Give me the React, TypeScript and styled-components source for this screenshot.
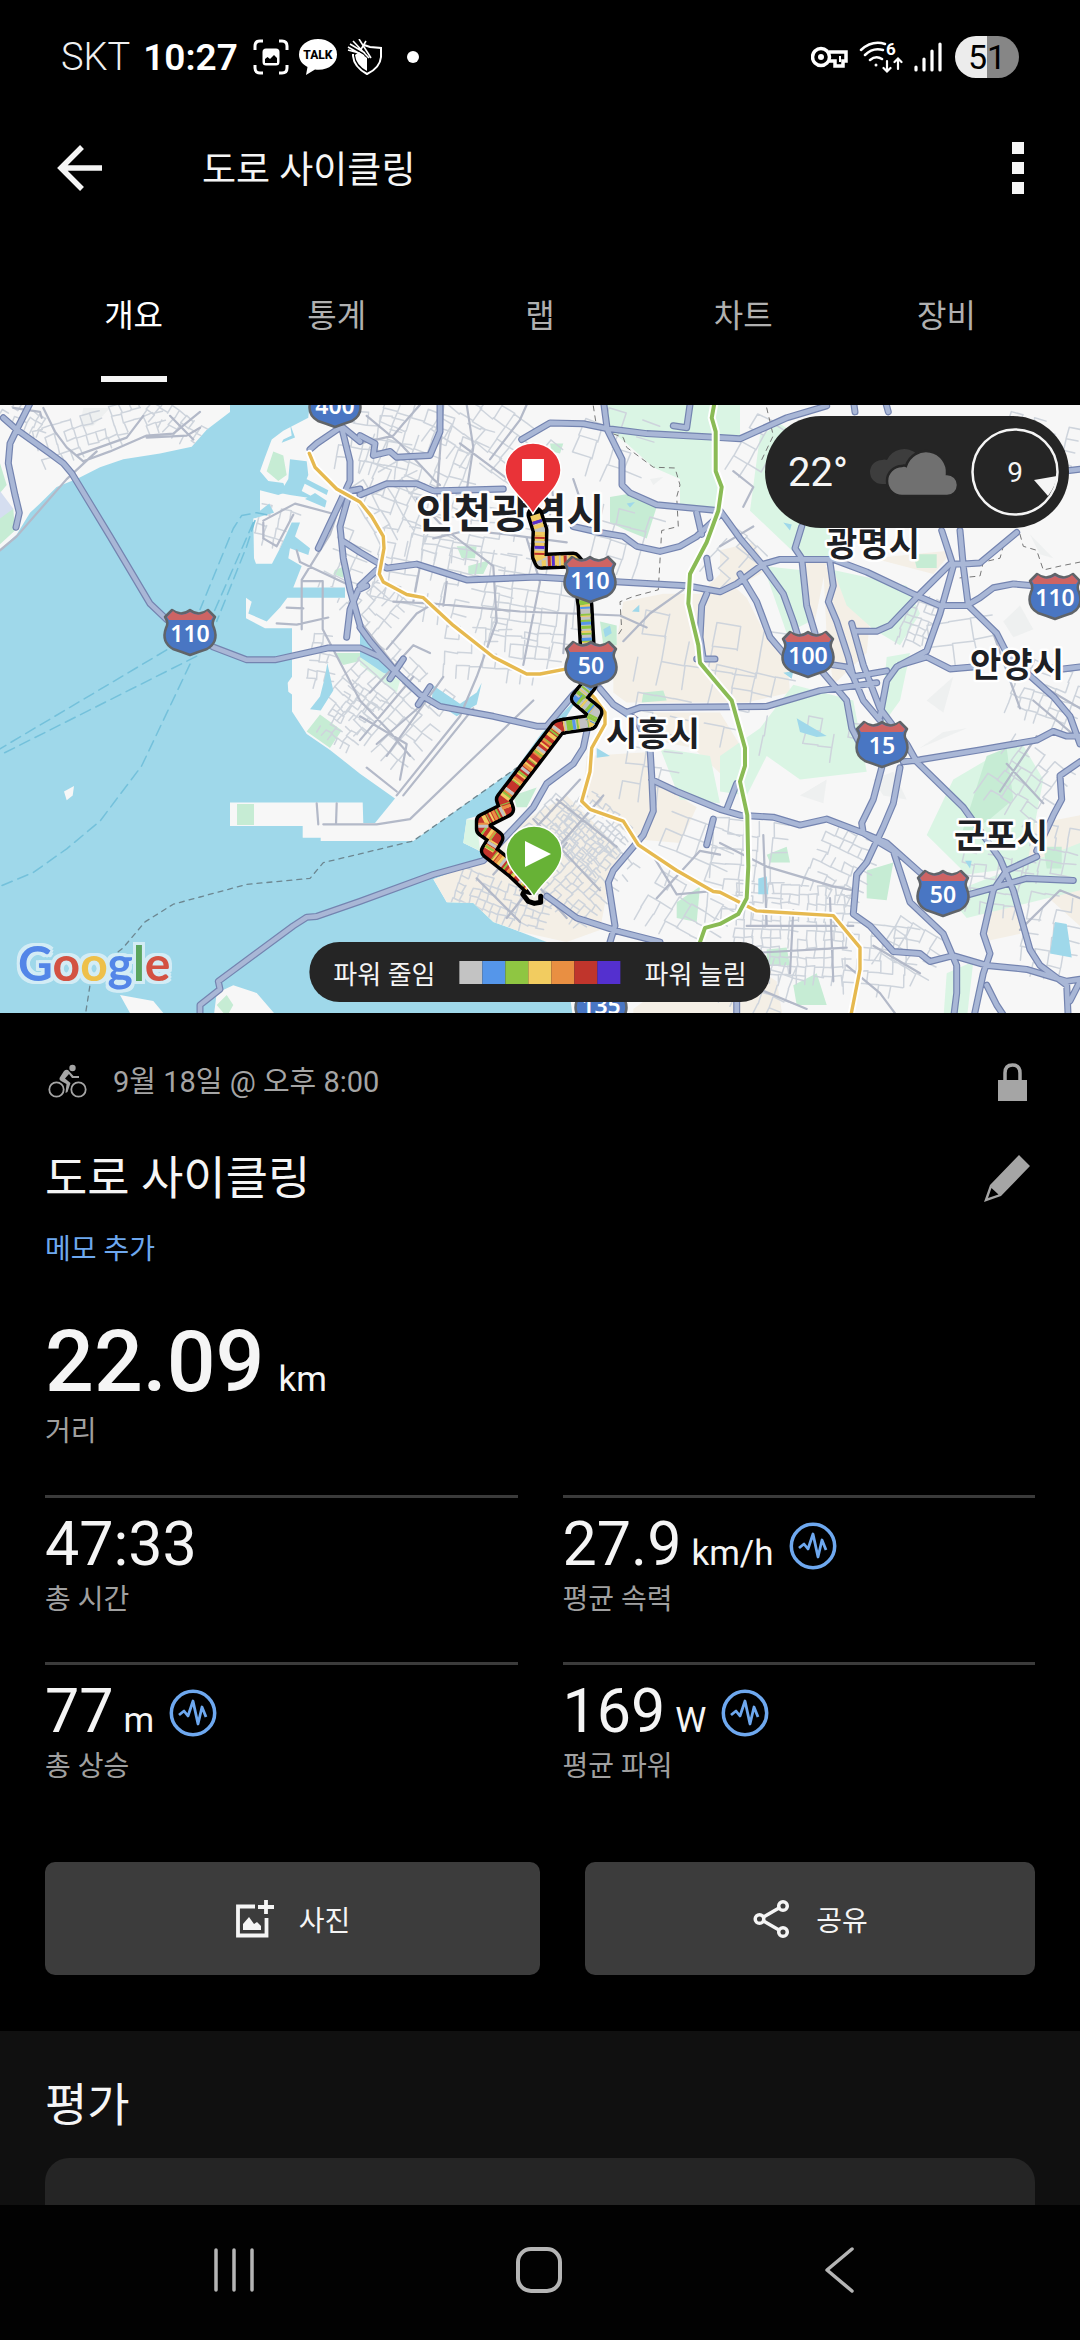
import React, { useState } from 'react';
import styled, { createGlobalStyle } from 'styled-components';

const GlobalStyle = createGlobalStyle`
  *, *::before, *::after { box-sizing: border-box; }
  body {
    margin: 0;
    background: #000;
    color: #f5f5f5;
    font-family: Roboto, 'Noto Sans CJK KR', sans-serif;
  }
  button { font: inherit; color: inherit; background: none; border: 0; padding: 0; margin: 0; cursor: pointer; }
  h1, h2, p, dl, dt, dd { margin: 0; font-weight: 400; }
  svg { display: block; flex: none; }
`;

const Screen = styled.div`
  display: flex;
  flex-direction: column;
  min-height: 100vh;
  background: #000;
`;

/* ---------- status bar ---------- */

const StatusBar = styled.div`
  display: flex;
  align-items: center;
  justify-content: space-between;
  height: 114px;
  padding: 0 61px;
`;
const StatusGroup = styled.div<{ $gap: number }>`
  display: flex;
  align-items: center;
  gap: ${(p) => p.$gap}px;
`;
const Carrier = styled.span`
  font-size: 38px;
  font-weight: 300;
  color: #f0f0f0;
`;
const Clock = styled.span`
  margin: 0 5px 0 3px;
  font-size: 37px;
  font-weight: 600;
  color: #fff;
`;
const Battery = styled.span`
  display: flex;
  align-items: center;
  justify-content: center;
  width: 64px;
  height: 42px;
  border-radius: 21px;
  background: linear-gradient(90deg, #ececec 50%, #868686 50%);
  color: #000;
  font-size: 34px;
  font-weight: 400;
`;
const Talk = styled.span`
  position: relative;
  display: block;
  width: 38px;
  height: 36px;
`;
const TalkText = styled.span`
  position: absolute;
  top: 9px;
  left: 0;
  right: 0;
  text-align: center;
  font-size: 12px;
  line-height: 14px;
  font-weight: 800;
  color: #000;
`;

/* ---------- header and tabs ---------- */

const Header = styled.header`
  display: flex;
  align-items: center;
  height: 108px;
  padding: 0 45px;
`;
const IconButton = styled.button`
  display: flex;
  align-items: center;
  justify-content: center;
  height: 68px;
`;
const HeaderTitle = styled.h1`
  flex: 1;
  margin-left: 87px;
  padding-top: 6px;
  font-size: 37px;
  line-height: 56px;
`;
const Tabs = styled.div`
  display: flex;
  height: 183px;
  padding: 0 32px 23px;
`;
const Tab = styled.button<{ $active: boolean }>`
  flex: 1;
  display: flex;
  flex-direction: column;
  align-items: center;
  justify-content: flex-end;
  gap: 40px;
  font-size: 32px;
  line-height: 40px;
  color: ${(p) => (p.$active ? '#fff' : '#b0b0b0')};
  &::after {
    content: '';
    width: 66px;
    height: 6px;
    background: ${(p) => (p.$active ? '#f5f5f5' : 'transparent')};
  }
`;

/* ---------- map ---------- */

const MapPanel = styled.section`
  position: relative;
  overflow: hidden;
`;
const MapDrawing = styled.svg`
  width: 100%;
  height: auto;
`;
const GoogleMark = styled.span`
  position: absolute;
  left: 18px;
  bottom: 20px;
  font-family: Lato, sans-serif;
  font-size: 48px;
  line-height: 60px;
  font-weight: 700;
  filter: drop-shadow(3px 0 0 #d3ecf5) drop-shadow(-3px 0 0 #d3ecf5) drop-shadow(0 3px 0 #d3ecf5) drop-shadow(0 -3px 0 #d3ecf5);
`;
const Letter = styled.span<{ $color: string }>`
  color: ${(p) => p.$color};
`;
const WeatherPill = styled.div`
  position: absolute;
  top: 11px;
  right: 11px;
  display: flex;
  align-items: center;
  gap: 11px;
  height: 112px;
  padding: 0 10px 0 23px;
  border-radius: 56px;
  background: #252525;
`;
const Temperature = styled.span`
  width: 71px;
  font-size: 40px;
`;
const Wind = styled.span`
  position: relative;
  display: flex;
  align-items: center;
  justify-content: center;
  width: 88px;
  height: 88px;
  font-size: 28px;
`;
const WindDial = styled.svg`
  position: absolute;
  inset: 0;
`;
const Legend = styled.div`
  position: absolute;
  bottom: 11px;
  left: 50%;
  transform: translateX(-50%);
  display: flex;
  align-items: center;
  gap: 24px;
  height: 60px;
  padding: 0 24px;
  border-radius: 30px;
  background: #252525;
  font-size: 26px;
  white-space: nowrap;
`;
const Swatches = styled.span`
  display: flex;
`;
const Swatch = styled.span<{ $color: string }>`
  width: 23px;
  height: 23px;
  background: ${(p) => p.$color};
`;

/* ---------- details ---------- */

const Details = styled.main`
  padding: 49px 45px 56px;
`;
const Row = styled.div<{ $top?: number }>`
  display: flex;
  align-items: center;
  margin-top: ${(p) => p.$top ?? 0}px;
`;
const When = styled.span`
  flex: 1;
  margin-left: 25px;
  font-size: 29px;
  line-height: 40px;
  color: #a5a5a5;
`;
const ActivityName = styled.h2`
  flex: 1;
  font-size: 46px;
  line-height: 64px;
`;
const NoteLink = styled.a`
  display: block;
  width: max-content;
  margin-top: 18px;
  font-size: 28px;
  line-height: 40px;
  color: #6ea8ef;
  text-decoration: none;
`;
const Value = styled.dd<{ $big?: boolean }>`
  display: flex;
  align-items: baseline;
  gap: ${(p) => (p.$big ? 14 : 10)}px;
  height: ${(p) => (p.$big ? 100 : 72)}px;
  font-size: ${(p) => (p.$big ? 86 : 61)}px;
  line-height: ${(p) => (p.$big ? 100 : 72)}px;
  font-weight: ${(p) => (p.$big ? 500 : 400)};
`;
const Unit = styled.span`
  font-size: 35px;
  font-weight: 400;
`;
const Label = styled.dt`
  font-size: 28px;
  line-height: 40px;
  color: #a0a0a0;
`;
const Figure = styled.dl`
  display: flex;
  flex-direction: column-reverse;
`;
const Headline = styled(Figure)`
  margin-top: 42px;
`;
const StatGrid = styled.div`
  display: grid;
  grid-template-columns: 1fr 1fr;
  column-gap: 45px;
  margin-top: 43px;
`;
const Stat = styled(Figure)`
  padding: 10px 0 42px;
  border-top: 3px solid #3b3b3b;
`;
const PulseButton = styled.button`
  align-self: center;
  margin: 4px 0 0 5px;
`;
const Actions = styled.div`
  display: grid;
  grid-template-columns: 11fr 10fr;
  gap: 45px;
  margin-top: 33px;
`;
const ActionButton = styled.button`
  display: flex;
  align-items: center;
  justify-content: center;
  gap: 24px;
  height: 113px;
  border-radius: 10px;
  background: #3c3c3c;
  font-size: 28px;
`;

/* ---------- rating and system navigation ---------- */

const Rating = styled.section`
  flex: 1;
  display: flex;
  flex-direction: column;
  padding: 42px 45px 0;
  background: #101010;
`;
const RatingTitle = styled.h2`
  font-size: 46px;
  line-height: 64px;
`;
const RatingCard = styled.div`
  flex: 1;
  min-height: 47px;
  margin-top: 21px;
  border-radius: 24px 24px 0 0;
  background: #252525;
`;
const SystemNav = styled.nav`
  display: flex;
  justify-content: space-between;
  align-items: center;
  height: 135px;
  padding: 0 210px;
  padding-bottom: 6px;
  background: #020202;
`;

/* ---------- map data ---------- */

// Map features are kept in survey units: three per pixel across, 2.529 per pixel down.
const place = (d: string) =>
  d.replace(/(-?\d+),(-?\d+)/g, (_, x, y) => `${(Number(x) / 3).toFixed(1)},${(400 + Number(y) / 2.529).toFixed(1)}`);
const lines = (list: string[]) => list.map((l) => place('M' + l)).join(' ');
const areas = (list: string[]) => list.map((l) => place('M' + l + 'Z')).join(' ');

const LAND = areas([
  '0,0 690,0 690,30 620,75 575,118 480,135 370,150 300,170 235,198 170,220 120,262 90,285 50,340 0,380',
  '930,0 925,45 850,78 815,100 795,145 780,180 805,205 850,210 860,232 835,240 780,228 780,280 808,262 822,285 760,300 762,400 768,414 816,414 840,375 875,310 900,310 885,345 930,375 925,392 870,375 865,400 905,420 880,474 1035,474 1035,500 862,500 840,525 800,560 745,540 755,510 738,500 738,552 795,577 876,577 876,700 863,715 865,738 876,745 876,788 920,845 990,885 1080,945 1185,1008 1125,1070 1090,1070 1088,1018 690,1018 690,1077 908,1077 908,1107 962,1107 962,1115 1240,1115 1550,930 1625,842 1690,790 1740,745 1700,800 1600,900 1530,960 1480,1040 1400,1060 1390,1120 1450,1145 1450,1165 1300,1212 1340,1270 1420,1272 1480,1320 1560,1345 1640,1371 1700,1450 1720,1568 3240,1568 3240,0',
  '192,990 222,976 218,1000 200,1012',
  '360,1505 460,1520 490,1550 390,1550',
  '640,1568 650,1500 700,1480 770,1500 840,1568',
]);
const WATER = areas([
  '915,198 985,228 980,240 910,210', '945,235 980,255 975,272 915,250', '870,60 885,95 845,108 850,100 875,90',
  '870,150 920,155 925,190 905,230 950,250 870,240 840,235 865,200',
  '982,665 1000,735 962,785 930,782 960,750 975,700',
  '1080,570 1120,640 1190,700 1150,690 1080,650', '1300,722 1380,768 1430,740 1445,715 1430,770 1370,800 1295,758',
  '1790,880 1830,900 1790,905', '1896,535 1918,518 1918,536', '1810,580 1830,570 1835,590 1815,600',
  '2390,805 2480,850 2450,852 2400,840', '3165,1320 3200,1325 3215,1410 3150,1400',
  '2275,1210 2300,1205 2305,1250 2275,1250', '2350,310 2375,315 2370,330', '2895,1165 2915,1165 2910,1185',
  '2350,690 2380,685 2375,705', '1880,262 1905,258 1890,272',
]);
const BEIGE = areas([
  '1870,510 1990,490 2100,490 2160,440 2240,500 2300,600 2360,640 2370,740 2240,765 1880,765 1840,740 1840,650 1860,560',
  '1960,790 2160,790 2240,900 2180,960 2080,880 1960,860', '1760,900 1950,890 1960,960 2090,1030 2040,1120 1900,1110 1750,1000',
  '1480,1110 1700,1000 1830,1110 1860,1150 1820,1250 1800,1340 1700,1371 1560,1345 1480,1320 1420,1272 1340,1270 1300,1212',
  '2470,420 2620,470 2600,640 2500,720 2480,600', '2400,400 2480,410 2440,580 2400,500',
  '3060,1080 3240,1050 3240,1330 3120,1240', '2950,1260 3060,1230 3060,1350 2950,1370', '2160,380 2260,360 2300,430 2160,500',
  '2620,400 2860,380 2800,440', '1900,1540 2160,1380 2330,1470 2350,1568 1900,1568',
]);
const PALE_GREEN = areas([
  '1820,0 2160,0 2160,290 2040,270 2040,200 1960,170 1880,110 1820,70', '2160,12 2220,12 2220,90 2160,100',
  '2280,90 2340,60 2500,150 2560,400 2400,400 2300,320 2250,280', '2290,420 2400,430 2430,560 2360,590',
  '2500,430 2720,470 2760,540 2700,620 2620,580 2540,520', '2380,720 2560,760 2600,940 2400,960 2300,900 2240,1000 2160,990 2160,900 2280,830',
  '2700,760 2730,640 2660,650 2640,830', '2860,960 3060,860 3130,960 3080,1180 2900,1200 2780,1100', '1980,880 2130,900 2160,1020 2040,1010',
  '1080,640 1200,710 1190,740 1080,670', '2840,1250 3240,1120 3240,1240 2900,1310', '2840,1450 2920,1420 2900,1568 2830,1568',
  '1380,1060 1430,1062 1440,1140 1388,1120', '1340,1270 1420,1272 1480,1320 1640,1371 1600,1375 1460,1330 1380,1290',
]);
const PARK = areas([
  '0,160 20,215 0,235', '0,290 40,275 45,330 0,365', '820,130 850,140 860,190 835,205 800,180', '1005,430 1035,420 1030,450 1000,440',
  '960,795 1025,835 990,880 920,838', '711,1022 762,1022 762,1075 711,1075', '650,1530 680,1505 700,1530 680,1560',
  '1370,370 1430,370 1425,400 1385,400', '1405,420 1470,405 1450,440 1405,440', '1830,245 1900,235 1970,270 1940,350 1880,330 1830,310',
  '1930,740 1990,735 2000,760 1925,765', '2030,1270 2100,1230 2090,1320 2030,1310', '2600,1190 2680,1170 2660,1265 2600,1260',
  '2300,1150 2360,1130 2370,1170 2310,1170', '2380,1480 2450,1450 2480,1530 2390,1530', '2960,900 3020,880 3040,1010 2970,1060 2880,1110',
  '2740,390 2810,390 2810,425 2750,425', '3130,1130 3185,1130 3185,1185 3140,1185', '2300,1390 2360,1385 2370,1430 2300,1430',
  '1000,640 1080,640 1080,660 1030,670', '1650,110 1690,110 1680,135 1655,130', '1540,1000 1610,980 1580,1030 1550,1030', '1800,560 1850,570 1850,620 1810,620',
]);
const HILLS = areas([
  '2780,760 2860,700 2830,790', '2620,960 2680,940 2720,1010 2650,1000', '2400,1000 2480,960 2470,1020', '3010,560 3060,520 3100,580 3040,600',
  '3090,340 3160,400 3120,390', '250,20 330,20 280,65 240,70', '1950,200 1990,195 1960,215', '2760,880 2830,840 2900,830',
]);

const HIGHWAYS = lines([
  '10,45 50,75 150,135 190,160 215,185 330,345 450,515 500,555 640,625 740,657 825,657 985,627 1080,627 1140,650 1190,690 1260,745 1320,775 1480,800 1610,825 1640,825 1720,745 1780,700',
  '95,0 50,75 30,110 25,160 45,240 58,285 48,322',
  '1025,70 1050,155 1050,205 955,375', '1020,70 950,110 930,125', '1030,70 1080,105', '1080,225 1050,230 1020,320 1030,400 1050,480 1080,570',
  '1100,470 1075,480 1050,530 1040,600', '1025,355 1080,385 1160,425 1250,415 1400,455 1610,448 1860,460 2060,470 2160,485 2210,465 2290,415 2340,403 2500,403 2600,435 2750,495 2820,520 2900,520 2940,500 2980,475 3040,465 3100,470',
  '600,1568 600,1530 660,1490 655,1470 880,1330 920,1308 950,1306 1080,1268 1300,1200 1450,1165 1500,1120 1600,1030 1640,970 1720,920 1750,880 1765,820 1775,770',
  '1080,240 1160,212 1250,212 1300,230 1510,225', '1565,100 1650,58 1750,60 1820,72 1940,85 2160,95 2220,98 2360,45 2480,15',
  '1810,0 1822,75 1866,150 1866,215 1890,235 1970,265 2160,280 2220,350 2290,420 2350,490 2380,560 2395,600',
  '1720,320 1800,335 1870,345 1910,370 1980,383 2040,370 2090,345 2160,290', '1320,0 1320,80 1290,140 1190,145 1170,130 1120,140 1125,110 1080,90',
  '1080,470 1130,430', '1080,575 1110,610 1190,690', '1170,705 1210,655', '1255,770 1290,725', '1800,730 1840,770 1880,790 1920,778 2300,775 2460,735 2630,715', '1840,770 1910,810 1950,880 1955,950 1960,1040 1930,1100 1840,1190 1825,1220 1845,1330 1830,1371',
  '1955,960 2030,990 2160,1035 2220,1050 2320,1055 2400,1075 2480,1060 2590,1095 2660,1120 2760,1195 2800,1220',
  '1640,1255 1730,1310 1860,1345 1980,1371', '2120,490 2105,520 2100,600 2110,655', '2090,655 2145,655', '2020,65 2060,70 2070,12', '2090,285 2105,340', '2120,400 2130,450', '2120,1125 2140,1060',
  '2220,440 2270,510 2310,600 2350,640', '2405,320 2385,375 2405,400 2420,520 2445,590', '2490,410 2500,470 2485,510 2510,560 2545,650 2560,700 2590,760 2640,810',
  '2555,565 2590,670 2640,780 2720,870 2750,915 2890,1030 3000,1160 3040,1240 3090,1390 3120,1430 3200,1480 3205,1568', '2460,680 2540,760 2555,830 2580,870', '2500,670 2540,675 2560,700 2660,685',
  '2640,800 2660,710 2690,675 2780,635 2820,540 2860,420 2825,330', '2570,585 2630,585 2670,570 2760,490 2850,415 2890,415 2940,412 3050,335',
  '2880,330 2890,420 2905,520 2990,590 3020,640 3080,690 3160,750 3210,800 3240,870', '2700,670 2780,650 2850,680 2920,675', '3190,680 3240,675',
  '2710,915 2760,910 2940,885 3110,860 3160,838 3200,850 3240,850', '2645,930 2620,1010 2585,1070 2590,1095 2680,1140 2730,1270 2830,1350 2870,1430 2870,1500 2860,1568',
  '2700,930 2680,1020 2650,1080 2600,1170 2570,1200 2560,1300 2610,1330 2680,1395 2760,1400 2790,1420 2860,1405 2960,1430 3080,1440 3200,1470 3240,1465',
  '2910,1250 3080,1210 3220,1215', '3110,1155 3020,1190 2980,1240 2950,1350 2970,1400 2950,1450 2920,1568', '2960,1480 2990,1530 3020,1568', '3240,915 3180,950 3185,1010 3160,1050 3110,1140', '3240,1470 3210,1520',
  '2180,1035 2210,970', '2560,0 2565,30', '2655,0 2665,30', '3190,180 3240,175', '2210,1510 2210,1568',
]);
const ARTERIALS = lines([
  '130,20 165,80 200,120 250,155 330,130 440,90 520,85 600,30', '230,140 380,95 430,40', '0,380 50,345 200,200 290,130', '40,20 120,30 125,45', '440,95 560,90 600,70', '510,40 580,100',
  '790,305 885,262 1010,290 990,340 905,455 905,580', '790,310 790,350 830,370 880,290', '905,458 968,458 968,580', '890,380 900,410 1040,465', '830,565 890,568 985,550', '860,525 910,527', '968,580 1080,760 1170,840 1230,900',
  '1080,110 1180,90 1210,60 1260,12', '1100,40 1200,110 1300,200 1320,215', '1310,250 1330,12', '1250,250 1340,330 1480,420 1490,560 1430,700 1380,800 1190,1000', '1180,510 1300,515 1560,535 1860,545 1940,575', '1580,350 1620,460 1570,670',
  '1380,110 1460,160 1570,230', '1470,150 1560,50 1580,12', '1300,350 1400,330 1520,340 1700,360', '1160,630 1250,540 1290,520', '1110,740 1240,620 1290,640', '1080,800 1220,870 1200,960',
  '1080,560 1200,690', '1160,900 1330,700', '1210,1000 1420,780', '1130,870 1280,760', '1080,860 1240,700', '1100,930 1190,990', '1480,1200 1740,960', '1560,1240 1810,1000', '1430,1210 1560,1320', '1520,1140 1700,1310', '1600,1060 1800,1240', '1670,1010 1850,1130', '1520,1310 1700,1120',
  '1950,1140 2030,1250 2160,1240', '1970,1260 2100,1140 2160,1150', '1870,610 1950,540 2050,480', '2160,1120 2300,1180 2500,1230 2560,1240', '2240,1330 2560,1330', '2230,1400 2540,1385', '2290,1100 2300,1330', '2380,1290 2370,1450', '2490,1260 2500,1470',
  '2540,1430 2640,1500 2700,1568', '2620,1380 2760,1450', '2250,1480 2420,1540', '3020,920 3130,1020', '3000,990 3110,850', '3100,760 3240,860', '2980,590 3060,780', '3080,700 3240,780', '3060,1340 3180,1240 3240,1260',
  '2160,370 2220,340 2260,320', '2200,180 2260,220 2230,270', '970,1073 1130,1073 1230,1060 1600,760', '950,1020 955,1073', '1010,1020 1008,1073', '1720,200 1760,300 1800,330',
  '1400,12 1420,120 1400,230', '1640,120 1660,250 1640,330', '1340,460 1330,520', '1700,540 1690,640', '1260,420 1240,510',
]);

const streets = (boxes: number[][]) => {
  let seed = 7;
  const rnd = () => {
    seed = (seed * 16807) % 2147483647;
    return seed / 2147483647;
  };
  let d = '';
  boxes.forEach(([cx, cy, w, h, deg, step]) => {
    const a = (deg * Math.PI) / 180;
    const at = (x: number, y: number) =>
      `${(cx + x * Math.cos(a) - y * Math.sin(a)).toFixed(1)},${(cy + x * Math.sin(a) + y * Math.cos(a)).toFixed(1)}`;
    for (let x = -w / 2; x <= w / 2; x += step)
      for (let y = -h / 2; y <= h / 2; y += step) {
        if (rnd() < 0.7) d += `M${at(x, y)}L${at(x + step, y + (rnd() - 0.5) * 3)}`;
        if (rnd() < 0.7) d += `M${at(x, y)}L${at(x + (rnd() - 0.5) * 3, y + step)}`;
      }
  });
  return d;
};
// centre x, centre y, width, height, rotation, block size
const STREETS = streets([
  [95, 430, 120, 36, -18, 10], [175, 422, 60, 24, 35, 9], [20, 415, 50, 20, 30, 7], [272, 525, 30, 36, 15, 10], [375, 440, 70, 50, 10, 12], [420, 470, 110, 120, 20, 14], [345, 560, 30, 60, 22, 12], [490, 440, 110, 70, 35, 15],
  [440, 580, 130, 80, 12, 14], [540, 600, 90, 80, 8, 16], [500, 650, 110, 40, 5, 13], [350, 715, 36, 60, 35, 7], [375, 600, 40, 40, 40, 10], [470, 530, 120, 50, 8, 15], [390, 500, 60, 60, -30, 17],
  [390, 700, 100, 90, 42, 12], [320, 660, 20, 50, 10, 9], [610, 440, 60, 60, 20, 18], [570, 860, 110, 80, 42, 8], [500, 900, 90, 36, 20, 8], [590, 830, 60, 60, 42, 6], [650, 740, 40, 90, 10, 18],
  [700, 650, 120, 60, 10, 24], [690, 850, 60, 60, 20, 18], [680, 910, 70, 50, 30, 14], [740, 870, 60, 100, 5, 15], [790, 930, 110, 90, 2, 9], [840, 860, 50, 60, 25, 10], [880, 960, 70, 70, 5, 12], [760, 980, 60, 50, 20, 12],
  [1020, 780, 60, 70, 35, 12], [1045, 690, 60, 50, 20, 10], [920, 620, 30, 50, 20, 8], [1040, 440, 70, 40, 15, 12], [735, 560, 40, 50, 40, 14], [990, 880, 60, 50, 10, 12], [1050, 930, 50, 70, 10, 14],
  [830, 740, 50, 40, 10, 14], [740, 700, 60, 60, 12, 20], [910, 950, 50, 50, 30, 14], [960, 640, 60, 40, -10, 22], [1050, 850, 40, 50, 10, 12], [760, 450, 40, 60, 30, 16], [620, 540, 50, 60, 15, 16],
]);

const FERRY = lines([
  '800,290 770,285 725,292 700,325 600,530', '760,310 640,540', '765,305 740,370 650,560', '500,632 0,882', '590,648 0,898', '570,668 425,925 300,1065 200,1135 100,1195 0,1230',
]);
const SEA_BORDER = lines(['258,1545 270,1480 320,1420 370,1385 435,1320 520,1275 600,1257 740,1225 930,1210 970,1170 1080,1148 1240,1115 1400,1020 1550,930']);
const LAND_BORDER = lines([
  '1780,15 1790,70 1870,95 1880,120 1960,170 2025,172 2040,215 2030,245 2035,320 1985,330 1975,480 1900,497 1860,510 1865,580 1850,600', '2300,20 2320,90 2280,160', '3060,340 3070,370 3110,380 3130,430 3180,420 3240,410', '2880,450 2940,445 2950,410 3000,400 3010,370',
]);
const METRO_YELLOW = lines([
  '928,135 945,170 1010,225 1080,258 1115,295 1150,345 1152,375 1138,440 1150,460 1220,492 1270,500 1360,570 1480,650 1580,693 1620,693 1700,680 1785,755 1815,790 1815,820 1775,880 1770,940 1745,1015 1770,1035 1870,1065 1915,1125 2030,1190 2140,1243 2160,1245 2270,1292 2500,1304 2580,1385 2580,1440 2550,1568',
]);
const METRO_GREEN = lines([
  '2145,0 2135,45 2147,80 2147,180 2165,220 2155,280 2120,360 2070,440 2065,515 2095,620 2100,665 2160,725 2195,760 2235,880 2235,925 2220,965 2242,1050 2245,1180 2240,1260 2215,1300 2160,1325 2115,1335 2100,1371',
]);
const RIDE_NORTH = place('M1605,290 1620,330 1618,395 1625,408 1720,405 1740,425');
const RIDE_MIDDLE = place('M1740,425 1755,520 1768,720 1735,755 1785,790 1770,815 1690,825');
const RIDE_SOUTH = place('M1690,825 1675,828 1510,1010 1520,1035 1450,1065 1450,1085 1488,1108 1465,1140 1540,1190 1590,1230');
const RIDE_LOOP = place('M1580,1230 1568,1250 1585,1268 1603,1273 1622,1270 1622,1255');

const RIDE_LEGS = [
  { d: RIDE_NORTH, colors: ['#f2cc60', '#c3c3c3', '#b92f2a', '#f2cc60', '#5430cf'] },
  { d: RIDE_MIDDLE, colors: ['#c3c3c3', '#8fc642', '#5596ea', '#f2cc60', '#8fc642'] },
  { d: RIDE_SOUTH, colors: ['#c5352c', '#f2cc60', '#e98f42', '#8fc642', '#c3c3c3'] },
];
const DASHES = ['none', '4 9 2 4', '3 13', '2 9 1 14', '3 23'];

const SHIELDS: [number, number, string][] = [
  [335, 404, '400'], [190, 632, '110'], [590, 579, '110'], [591, 664, '50'], [808, 654, '100'], [882, 744, '15'], [943, 893, '50'], [1055, 596, '110'], [601, 1004, '135'],
];
const CITIES: [number, number, string, number][] = [
  [510, 528, '인천광역시', 41], [653, 746, '시흥시', 34], [873, 556, '광명시', 34], [1017, 677, '안양시', 34], [1001, 848, '군포시', 34],
];

const MapText = styled.text`
  text-anchor: middle;
  font-family: 'Noto Sans CJK KR', sans-serif;
  font-weight: 700;
  fill: #1d2024;
  stroke: #fff;
  stroke-width: 5px;
  stroke-linejoin: round;
  paint-order: stroke;
`;
const ShieldText = styled.text`
  text-anchor: middle;
  font-family: 'Noto Sans', sans-serif;
  font-size: 23px;
  font-weight: 600;
  fill: #fff;
`;

const Pin = ({ x, y, color, children }: { x: number; y: number; color: string; children: React.ReactNode }) => (
  <g transform={`translate(${x} ${y})`}>
    <path d="M0,0C-6,-13 -28,-26 -28,-44A28,27 0 0 1 28,-44C28,-26 6,-13 0,0Z" fill={color} stroke="#fff" strokeWidth="1.5" />
    {children}
  </g>
);

const MapView = () => (
  <MapDrawing viewBox="0 405 1080 608" role="img" aria-label="지도" fill="none" strokeLinejoin="round" strokeLinecap="round">
    <defs>
      <clipPath id="land"><path d={LAND} /></clipPath>
    </defs>
    <rect x="0" y="400" width="1080" height="620" fill="#9fd8ea" />
    <path d={LAND} fill="#f7f7f7" />
    <g clipPath="url(#land)">
      <path d={BEIGE} fill="#f4efe6" />
      <path d={PALE_GREEN} fill="#daf5e4" />
      <path d={PARK} fill="#c6ecd4" />
      <path d={HILLS} fill="#e9ecec" fillOpacity="0.7" />
      <path d={place('M0,230 40,275 0,300Z')} fill="#d5def0" />
      <path d={STREETS} stroke="#ced4dc" strokeWidth="1.5" />
    </g>
    <path d={WATER} fill="#9fd8ea" />
    <path d={ARTERIALS} stroke="#b3b9c8" strokeWidth="2.2" />
    <path d={FERRY} stroke="#74c1db" strokeWidth="1.5" strokeDasharray="11 6" />
    <path d={SEA_BORDER} stroke="#6d8791" strokeWidth="1.3" strokeDasharray="5 5" />
    <path d={LAND_BORDER} stroke="#777" strokeWidth="1" strokeDasharray="5 5" />
    <path d={HIGHWAYS} stroke="#7484b0" strokeWidth="7" />
    <path d={HIGHWAYS} stroke="#a9b7d6" strokeWidth="4.6" />
    <path d={METRO_YELLOW} stroke="#fff" strokeWidth="7" />
    <path d={METRO_YELLOW} stroke="#e6b94f" strokeWidth="3.4" />
    <path d={METRO_GREEN} stroke="#fff" strokeWidth="8" />
    <path d={METRO_GREEN} stroke="#8abb55" strokeWidth="4" />
    {CITIES.map(([x, y, name, size]) => (
      <MapText key={name} x={x} y={y} fontSize={size}>{name}</MapText>
    ))}
    {RIDE_LEGS.map((leg) => <path key={leg.d} d={leg.d} stroke="#000" strokeWidth="17" />)}
    <path d={RIDE_LOOP} stroke="#000" strokeWidth="5" />
    {RIDE_LEGS.map((leg) =>
      leg.colors.map((c, i) => (
        <path key={leg.d + i} d={leg.d} stroke={c} strokeWidth="10" strokeLinecap="butt" strokeDasharray={DASHES[i]} strokeDashoffset={i * 5} />
      )),
    )}
    {SHIELDS.map(([x, y, n]) => (
      <g key={`${x}-${n}`} transform={`translate(${x} ${y})`}>
        <path
          d="M-18,-22Q-9,-15 0,-22Q9,-15 18,-22L25,-15Q21,-9 24,-4Q29,10 17,17Q8,20 0,23Q-8,20 -17,17Q-29,10 -24,-4Q-21,-9 -25,-15Z"
          fill="#4976c3" stroke="#606469" strokeWidth="2.5"
        />
        <path d="M-17,-21Q-9,-14 0,-20Q9,-14 17,-21L23,-15L21,-12H-21L-23,-15Z" fill="#cd6464" />
        <ShieldText x="0" y="10">{n}</ShieldText>
      </g>
    ))}
    <Pin x={533} y={514} color="#e93338"><rect x="-11" y="-55" width="22" height="22" fill="#fff" /></Pin>
    <Pin x={534} y={897} color="#67b236"><path d="M-9,-56L17,-43L-9,-30Z" fill="#fff" /></Pin>
  </MapDrawing>
);

/* ---------- icons ---------- */

const CaptureIcon = () => (
  <svg width="36" height="36" viewBox="0 0 36 36" fill="none" stroke="#fff" strokeWidth="3">
    <path d="M2,11V7Q2,2 7,2H10M26,2H29Q34,2 34,7V11M34,26V29Q34,34 29,34H26M10,34H7Q2,34 2,29V26" />
    <path d="M13,9.500H23Q26.500,9.500 26.500,13V23Q26.500,26.500 23,26.500H13Q9.500,26.500 9.500,23V13Q9.500,9.500 13,9.500ZM12,24H24V19L21,16L17,20L14.500,18L12,20Z" fill="#fff" fillRule="evenodd" stroke="none" />
  </svg>
);
const TalkBubble = () => (
  <svg width="38" height="36" viewBox="0 0 38 36" fill="#fff">
    <path d="M19,0C9,0 0,6 0,15.500C0,21 3,25 8.500,28L7,36L16,30.500C29,32 38,25 38,15.500C38,6 29,0 19,0Z" />
  </svg>
);
const ShieldIcon = () => (
  <svg width="36" height="36" viewBox="0 0 36 36" fill="none" stroke="#fff" strokeWidth="2">
    <path d="M17,6L23,8L34,9V18Q33,29 20,35Q7,28 6,17V15" />
    <path d="M20,32Q9,26 8,16L12,13L20,19Z" fill="#fff" stroke="none" />
    <path d="M1,8L17,17M6,2L22,19M12,0L24,19M19,2L13,12M1,11L12,14M3,5L18,14" strokeWidth="1.600" />
  </svg>
);
const KeyIcon = () => (
  <svg width="37" height="22" viewBox="0 0 37 22" fill="none" stroke="#fff" strokeWidth="3.500">
    <circle cx="10" cy="11" r="8.500" />
    <circle cx="10" cy="11" r="3" fill="#fff" stroke="none" />
    <path d="M18,6H35V15H32V20H24V15H18" />
    <path d="M29,10V16" strokeWidth="2" />
  </svg>
);
const WifiText = styled.text`
  font-family: Roboto, sans-serif;
  font-size: 17px;
  font-weight: 700;
  fill: #fff;
`;
const WifiIcon = () => (
  <svg width="44" height="34" viewBox="0 0 44 34" fill="none" stroke="#fff" strokeWidth="2.500" strokeLinecap="round">
    <path d="M2,10Q13,0 26,4M6,15Q14,7 24,10M11,20Q17,15 23,19" />
    <circle cx="17" cy="25" r="1.500" fill="#fff" stroke="none" />
    <WifiText x="27" y="15" stroke="none">6</WifiText>
    <path d="M28,21V31M24.500,28L28,31.500L31.500,28M39,29V19M35.500,22L39,18.500L42.500,22" strokeWidth="2.200" />
  </svg>
);
const SignalIcon = () => (
  <svg width="30" height="32" viewBox="0 0 30 32" stroke="#fff" strokeWidth="3.200" strokeLinecap="round">
    <path d="M2,26V29M10,18V29M18,10V29M26,3V29" />
  </svg>
);
const BackIcon = () => (
  <svg width="70" height="68" viewBox="0 0 70 68" fill="none" stroke="#f5f5f5" strokeWidth="5.500">
    <path d="M37,13L16,34L37,55M16,34H57" />
  </svg>
);
const MoreIcon = () => (
  <svg width="23" height="52" viewBox="0 0 23 52" fill="#f5f5f5">
    <path d="M0,0H12V12H0ZM0,20H12V32H0ZM0,40H12V52H0Z" />
  </svg>
);
const BikeIcon = () => (
  <svg width="43" height="40" viewBox="0 0 43 40" fill="none" stroke="#a5a5a5" strokeWidth="1.800">
    <circle cx="11.500" cy="27.500" r="7.200" />
    <circle cx="33.500" cy="27.500" r="7.200" />
    <circle cx="27.500" cy="6" r="3.200" fill="#a5a5a5" stroke="none" />
    <path d="M23,8Q21,7 19,9L14.500,16Q14,18 16,19L21.500,22L20.500,31L22.500,30L25.500,21L20,16.500L24,12L27,16H34V14H28.500Z" fill="#a5a5a5" stroke="none" />
  </svg>
);
const LockIcon = () => (
  <svg width="38" height="40" viewBox="0 0 38 40" fill="none">
    <path d="M8,18V11Q8,3 15.500,3Q23,3 23,11V18" stroke="#a5a5a5" strokeWidth="3.500" />
    <path d="M1,18H30V39H1Z" fill="#a5a5a5" />
  </svg>
);
const PencilIcon = () => (
  <svg width="52" height="52" viewBox="0 0 52 52" fill="#a5a5a5">
    <path d="M36,3L47,14L18,44L1,50L7,33ZM8.500,36L5,46L15.500,42.500Z" fillRule="evenodd" />
  </svg>
);
const PulseIcon = () => (
  <svg width="48" height="48" viewBox="0 0 48 48" fill="none" stroke="#6ea8ef" strokeWidth="3.500">
    <circle cx="24" cy="24" r="21.700" />
    <path d="M10,26L15,22L19,27L24,12L29,35L33,18L37,28" strokeWidth="2.800" strokeLinejoin="round" />
  </svg>
);
const PhotoIcon = () => (
  <svg width="40" height="40" viewBox="0 0 40 40" fill="none" stroke="#f5f5f5" strokeWidth="3.800">
    <path d="M20,7.500H3V36.500H31.500V19M31,1V15M23,8H39" />
    <path d="M8,31V25L14,18L19,25L22,23L26,27V31Z" fill="#f5f5f5" stroke="none" />
  </svg>
);
const ShareIcon = () => (
  <svg width="40" height="40" viewBox="0 0 40 40" fill="none" stroke="#f5f5f5" strokeWidth="3.500">
    <circle cx="31" cy="7" r="4.300" />
    <circle cx="31" cy="33" r="4.300" />
    <circle cx="7.500" cy="20" r="4.300" />
    <path d="M11.500,18L27,9M11.500,22L27,31" />
  </svg>
);
const CloudIcon = () => (
  <svg width="90" height="52" viewBox="0 0 90 52">
    <path d="M12,38A12,12 0 0 1 12,14Q14,13 17,14A19,19 0 0 1 47,8L40,38Z" fill="#3d3d3d" />
    <path d="M32,50A15,15 0 0 1 32,20Q34,19 36,20A21,21 0 0 1 77,28A11,11 0 0 1 77,50Z" fill="#707070" stroke="#252525" strokeWidth="2.500" />
  </svg>
);

const TAB_NAMES = ['개요', '통계', '랩', '차트', '장비'];
const POWER_COLORS = ['#c3c3c3', '#5596ea', '#8fc642', '#f2cc60', '#e98f42', '#c0352c', '#5430cf'];
const GOOGLE: [string, string][] = [['G', '#5386e8'], ['o', '#d35242'], ['o', '#eec04a'], ['g', '#5386e8'], ['l', '#5aa55e'], ['e', '#d35242']];
const STATS = [
  { label: '총 시간', value: '47:33' },
  { label: '평균 속력', value: '27.9', unit: 'km/h' },
  { label: '총 상승', value: '77', unit: 'm' },
  { label: '평균 파워', value: '169', unit: 'W' },
];

export default function App() {
  const [tab, setTab] = useState(0);
  return (
    <Screen>
      <GlobalStyle />
      <StatusBar>
        <StatusGroup $gap={10}>
          <Carrier>SKT</Carrier>
          <Clock>10:27</Clock>
          <CaptureIcon />
          <Talk><TalkBubble /><TalkText>TALK</TalkText></Talk>
          <ShieldIcon />
          <svg width="48" height="12" viewBox="0 0 48 12"><circle cx="20" cy="6" r="6" fill="#fff" /></svg>
        </StatusGroup>
        <StatusGroup $gap={11}>
          <KeyIcon />
          <WifiIcon />
          <SignalIcon />
          <Battery>51</Battery>
        </StatusGroup>
      </StatusBar>
      <Header>
        <IconButton aria-label="뒤로"><BackIcon /></IconButton>
        <HeaderTitle>도로 사이클링</HeaderTitle>
        <IconButton aria-label="더보기"><MoreIcon /></IconButton>
      </Header>
      <Tabs role="tablist">
        {TAB_NAMES.map((name, i) => (
          <Tab key={name} role="tab" aria-selected={i === tab} $active={i === tab} onClick={() => setTab(i)}>{name}</Tab>
        ))}
      </Tabs>
      <MapPanel>
        <MapView />
        <GoogleMark>{GOOGLE.map(([c, color], i) => <Letter key={i} $color={color}>{c}</Letter>)}</GoogleMark>
        <WeatherPill>
          <Temperature>22°</Temperature>
          <CloudIcon />
          <Wind>
            <WindDial width="88" height="88" viewBox="0 0 88 88">
              <circle cx="44" cy="44" r="42.500" fill="none" stroke="#f5f5f5" strokeWidth="2.500" />
              <path d="M63,52L86,48Q84,59 77,68Z" fill="#f5f5f5" />
            </WindDial>
            9
          </Wind>
        </WeatherPill>
        <Legend>
          <span>파워 줄임</span>
          <Swatches>{POWER_COLORS.map((c) => <Swatch key={c} $color={c} />)}</Swatches>
          <span>파워 늘림</span>
        </Legend>
      </MapPanel>
      <Details>
        <Row>
          <BikeIcon />
          <When>9월 18일 @ 오후 8:00</When>
          <LockIcon />
        </Row>
        <Row $top={42}>
          <ActivityName>도로 사이클링</ActivityName>
          <IconButton aria-label="이름 편집"><PencilIcon /></IconButton>
        </Row>
        <NoteLink href="#note">메모 추가</NoteLink>
        <Headline>
          <Label>거리</Label>
          <Value $big>22.09<Unit>km</Unit></Value>
        </Headline>
        <StatGrid>
          {STATS.map((s) => (
            <Stat key={s.label}>
              <Label>{s.label}</Label>
              <Value>
                {s.value}
                {s.unit && <Unit>{s.unit}</Unit>}
                {s.unit && <PulseButton aria-label={s.label}><PulseIcon /></PulseButton>}
              </Value>
            </Stat>
          ))}
        </StatGrid>
        <Actions>
          <ActionButton><PhotoIcon />사진</ActionButton>
          <ActionButton><ShareIcon />공유</ActionButton>
        </Actions>
      </Details>
      <Rating>
        <RatingTitle>평가</RatingTitle>
        <RatingCard />
      </Rating>
      <SystemNav>
        <IconButton aria-label="최근 앱">
          <svg width="48" height="48" viewBox="0 0 48 48" stroke="#b5b5b5" strokeWidth="3.500" strokeLinecap="round">
            <path d="M6,4V44M24,4V44M42,4V44" />
          </svg>
        </IconButton>
        <IconButton aria-label="홈">
          <svg width="48" height="48" viewBox="0 0 48 48" fill="none" stroke="#b5b5b5" strokeWidth="4">
            <rect x="2" y="3" width="42" height="42" rx="13" />
          </svg>
        </IconButton>
        <IconButton aria-label="이전">
          <svg width="48" height="48" viewBox="0 0 48 48" fill="none" stroke="#b5b5b5" strokeWidth="3.500" strokeLinecap="round" strokeLinejoin="round">
            <path d="M30,3L5,24L30,45" />
          </svg>
        </IconButton>
      </SystemNav>
    </Screen>
  );
}
